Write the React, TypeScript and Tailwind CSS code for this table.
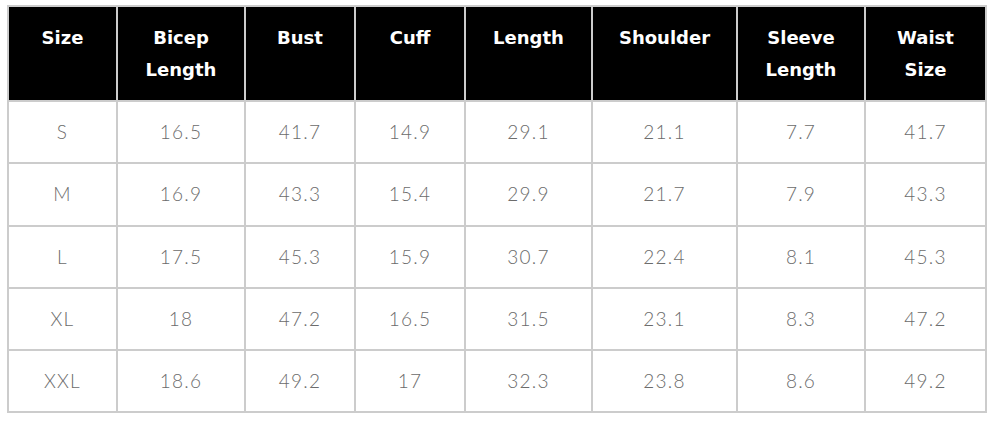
import React from "react";

const headers = [
  ["Size"],
  ["Bicep", "Length"],
  ["Bust"],
  ["Cuff"],
  ["Length"],
  ["Shoulder"],
  ["Sleeve", "Length"],
  ["Waist", "Size"],
];

const rows = [
  ["S", "16.5", "41.7", "14.9", "29.1", "21.1", "7.7", "41.7"],
  ["M", "16.9", "43.3", "15.4", "29.9", "21.7", "7.9", "43.3"],
  ["L", "17.5", "45.3", "15.9", "30.7", "22.4", "8.1", "45.3"],
  ["XL", "18", "47.2", "16.5", "31.5", "23.1", "8.3", "47.2"],
  ["XXL", "18.6", "49.2", "17", "32.3", "23.8", "8.6", "49.2"],
];

export default function App() {
  return (
    <div className="w-[998px] h-[426px] bg-white pl-[7px] pt-[5px]">
      <div className="grid w-[980px] gap-[2px] bg-[#cccccc] p-[2px] grid-cols-[107px_126px_108px_108px_125px_143px_126px_119px] grid-rows-[93px_60px_61px_60px_60px_60px]">
        {headers.map((h, i) => (
          <div
            key={i}
            className="bg-black text-white text-center pt-[15px] text-[18px] leading-[32px] font-bold"
            style={{ fontFamily: "'DejaVu Sans', Verdana, sans-serif" }}
          >
            {h.map((l, j) => (
              <div key={j}>{l}</div>
            ))}
          </div>
        ))}
        {rows.map((r, ri) =>
          r.map((c, ci) => (
            <div
              key={`${ri}-${ci}`}
              className="bg-white flex items-center justify-center text-[19px] text-[#6b6b6b] tracking-[1.2px]"
              style={{ fontFamily: "Lato, 'Open Sans', sans-serif", fontWeight: 300 }}
            >
              {c}
            </div>
          ))
        )}
      </div>
    </div>
  );
}
